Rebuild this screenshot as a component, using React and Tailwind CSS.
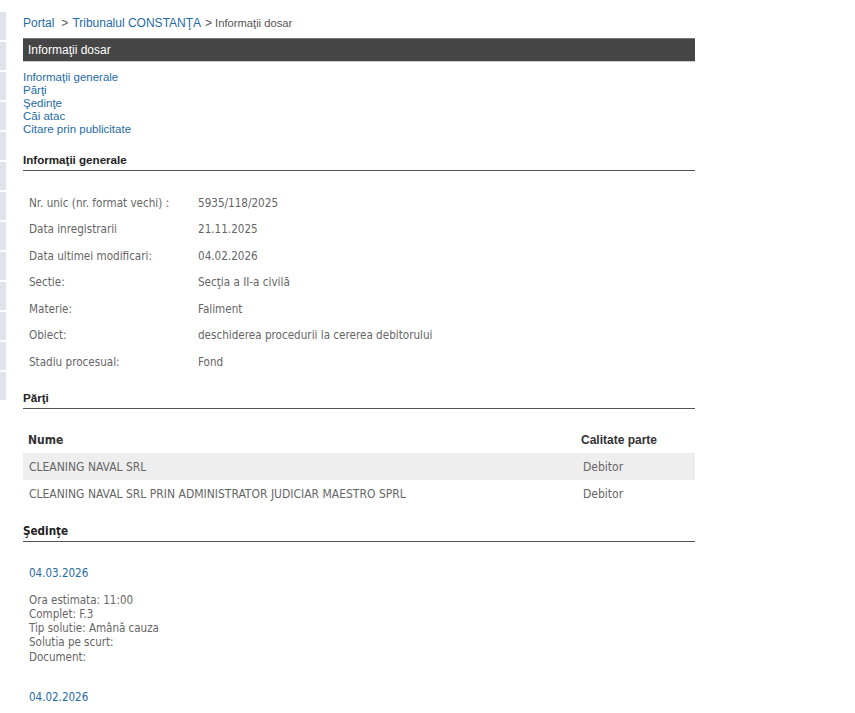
import React from "react";

const arial = { fontFamily: '"Liberation Sans", Arial, sans-serif' };
const tah = { fontFamily: '"DejaVu Sans Condensed", "DejaVu Sans", Verdana, sans-serif' };

const info = [
  ["Nr. unic (nr. format vechi) :", "5935/118/2025"],
  ["Data inregistrarii", "21.11.2025"],
  ["Data ultimei modificari:", "04.02.2026"],
  ["Sectie:", "Secţia a II-a civilă"],
  ["Materie:", "Faliment"],
  ["Obiect:", "deschiderea procedurii la cererea debitorului"],
  ["Stadiu procesual:", "Fond"],
];

function Heading({ children }) {
  return (
    <div className="border-b border-[#555] pb-[3px] text-[11.6px] font-bold text-[#222] leading-[14px]" style={arial}>
      {children}
    </div>
  );
}

export default function App() {
  return (
    <div className="relative min-h-[713px] w-[855px] bg-white">
      <div className="absolute left-0 top-[12px] flex w-[6px] flex-col gap-[2px]">
        {Array.from({ length: 13 }).map((_, i) => (
          <div key={i} className="h-[28px] bg-[#dfe4eb]" />
        ))}
      </div>
      <div className="ml-[23px] w-[672px] pt-[16px]">
        <div className="flex items-center text-[12px] leading-[14px] text-[#555]" style={arial}>
          <span className="text-[#1f6ba5]">Portal</span>
          <span className="ml-[7px]">&gt;</span>
          <span className="ml-[4px] text-[#1f6ba5]">Tribunalul CONSTANŢA</span>
          <span className="ml-[4px]">&gt;</span>
          <span className="ml-[3px] text-[11.2px]">Informaţii dosar</span>
        </div>
        <div
          className="mt-[8px] flex h-[24px] items-center border-t border-[#777] border-b border-b-[#ccc] bg-[#454545] px-[5px] text-[12px] text-white"
          style={arial}
        >
          Informaţii dosar
        </div>
        <div className="mt-[9px] flex flex-col text-[11.5px] leading-[13px] text-[#1f6ba5]" style={arial}>
          <span>Informaţii generale</span>
          <span>Părţi</span>
          <span>Şedinţe</span>
          <span>Căi atac</span>
          <span>Citare prin publicitate</span>
        </div>

        <div className="mt-[17px]">
          <Heading>Informaţii generale</Heading>
        </div>
        <div className="mt-[19px] flex flex-col text-[11.6px] text-[#666]" style={tah}>
          {info.map(([k, v]) => (
            <div key={k} className="flex h-[26.5px] items-center px-[6px]">
              <div className="w-[169px]">{k}</div>
              <div>{v}</div>
            </div>
          ))}
        </div>

        <div className="mt-[15px]">
          <Heading>Părţi</Heading>
        </div>
        <div className="mt-[18px] text-[12px]" style={tah}>
          <div className="flex h-[26px] items-center px-[5px] font-bold text-[#333]">
            <div className="flex-1">Nume</div>
            <div className="w-[109px]" style={arial}>
              <span className="text-[12px]">Calitate parte</span>
            </div>
          </div>
          <div className="flex h-[27px] items-center bg-[#eeeeee] px-[6px] pt-[2px] text-[#666]">
            <div className="flex-1">CLEANING NAVAL SRL</div>
            <div className="w-[106px]">Debitor</div>
          </div>
          <div className="flex h-[27px] items-center px-[6px] pt-[2px] text-[#666]">
            <div className="flex-1">CLEANING NAVAL SRL PRIN ADMINISTRATOR JUDICIAR MAESTRO SPRL</div>
            <div className="w-[106px]">Debitor</div>
          </div>
        </div>

        <div className="mt-[17px]">
          <div className="border-b border-[#555] pb-[3px] text-[11.6px] font-bold leading-[14px] text-[#222]" style={tah}>
            Şedinţe
          </div>
        </div>
        <div className="px-[6px] text-[11.5px]" style={tah}>
          <div className="mt-[24px] leading-[14px] text-[#1f6ba5]">04.03.2026</div>
          <div className="mt-[13px] flex flex-col leading-[14.25px] text-[#666]">
            <span>Ora estimata: 11:00</span>
            <span>Complet: F.3</span>
            <span>Tip solutie: Amână cauza</span>
            <span>Solutia pe scurt:</span>
            <span>Document:</span>
          </div>
          <div className="mt-[26px] leading-[14px] text-[#1f6ba5]">04.02.2026</div>
        </div>
      </div>
    </div>
  );
}
